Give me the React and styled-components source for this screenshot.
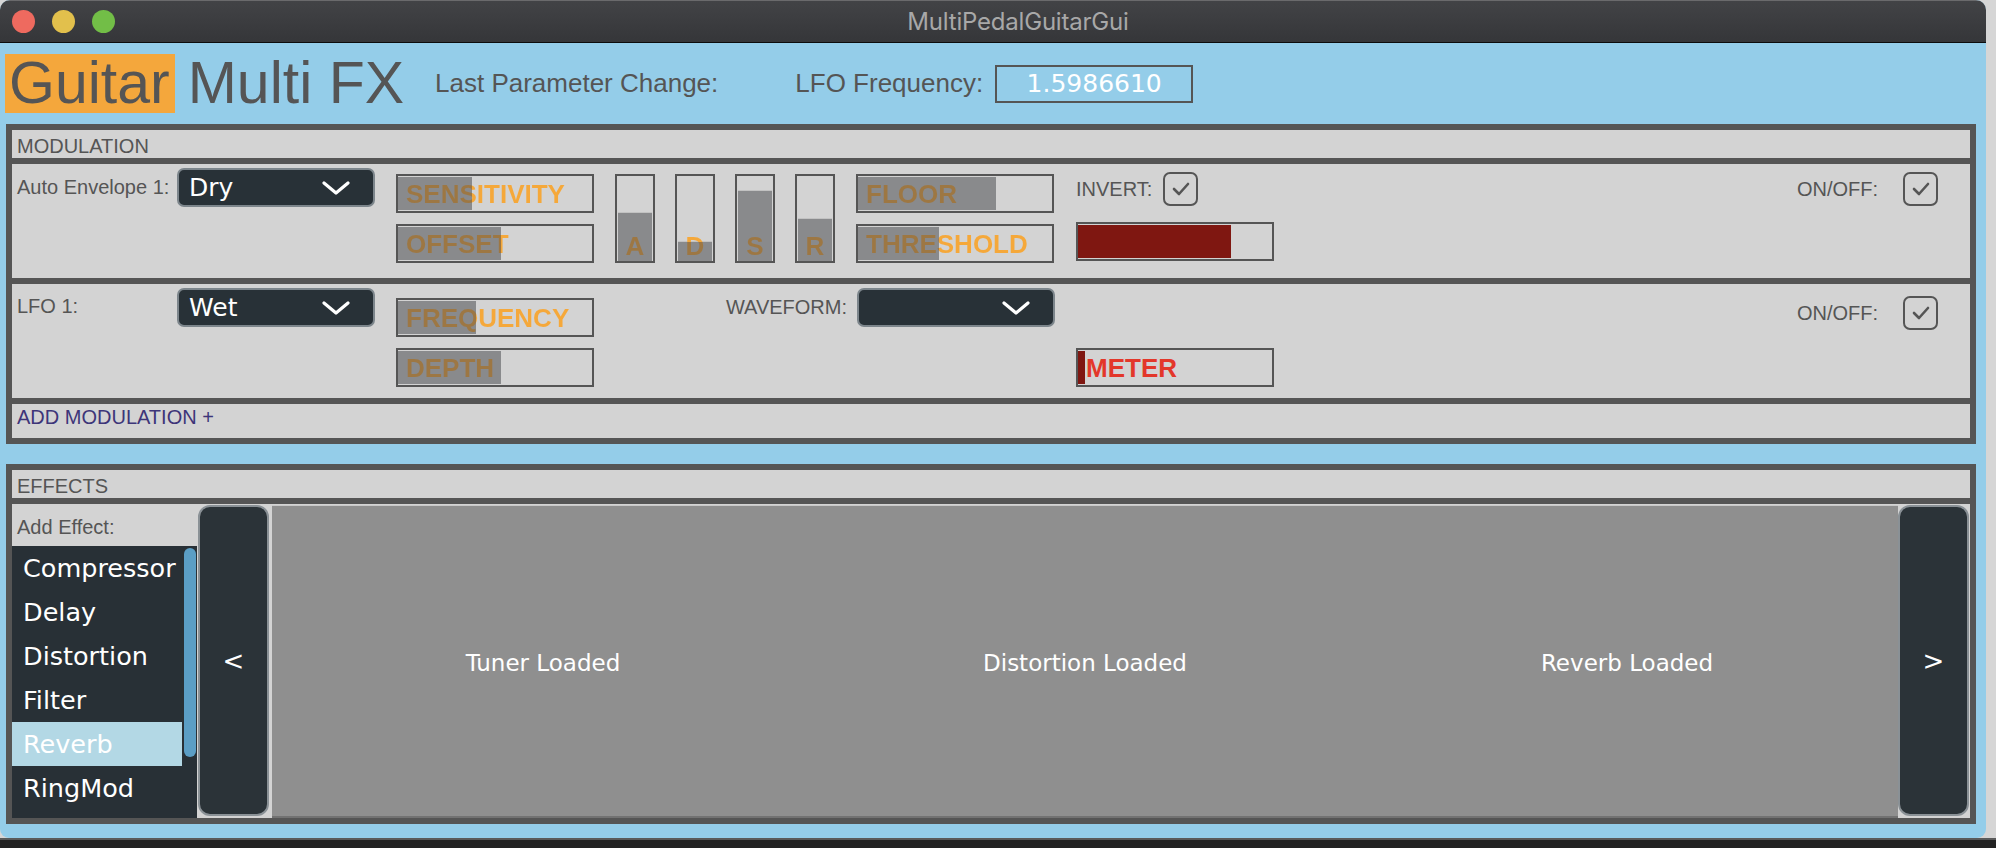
import React from "react";
import styled, { createGlobalStyle } from "styled-components";

const GlobalStyle = createGlobalStyle`
  html, body {
    margin: 0;
    padding: 0;
    background: #d6d6d6;
  }
  body {
    width: 1996px;
    height: 848px;
    overflow: hidden;
    font-family: "Liberation Sans", Arial, sans-serif;
  }
`;

const Screen = styled.div`
  width: 1996px;
  height: 848px;
  display: flex;
  flex-direction: column;
`;

const Window = styled.div`
  width: 1986px;
  height: 838px;
  flex: none;
  background: #94cde9;
  border-radius: 10px 10px 9px 9px;
  overflow: hidden;
  display: flex;
  flex-direction: column;
`;

const Desk = styled.div`
  flex: 1;
  background: #232323;
  border-top: 2px solid #5a5a5a;
`;

/* ---------- title bar ---------- */

const TitleBar = styled.div`
  height: 43px;
  flex: none;
  display: grid;
  grid-template-columns: 1fr auto 1fr;
  align-items: center;
  background: linear-gradient(#424346, #353639);
  border-top: 1px solid #6a6a6c;
  border-bottom: 1px solid #0c0c0c;
  box-sizing: border-box;
`;

const Lights = styled.div`
  display: flex;
  gap: 17px;
  padding-left: 12px;
`;

const Light = styled.span`
  width: 23px;
  height: 23px;
  border-radius: 50%;
  background: ${(p) => p.$color};
`;

const WindowTitle = styled.div`
  margin-left: 50px;
  font-family: Inter, "Open Sans", sans-serif;
  font-size: 24px;
  color: #a8a8a8;
  letter-spacing: -0.2px;
`;

/* ---------- header ---------- */

const Header = styled.header`
  height: 81px;
  flex: none;
  display: flex;
  align-items: center;
  padding-left: 5px;
  color: #555555;
`;

const Brand = styled.h1`
  margin: 0;
  display: flex;
  gap: 13px;
  font-size: 59px;
  font-weight: 400;
  line-height: 59px;
`;

const BrandMark = styled.span`
  background: #f4a73c;
  padding: 0 5px 0 4px;
`;

const HeaderLabel = styled.span`
  font-size: 26px;
  margin-left: ${(p) => p.$gap}px;
`;

const ValueBox = styled.div`
  margin-left: 12px;
  width: 198px;
  height: 38px;
  box-sizing: border-box;
  border: 2px solid #555555;
  display: flex;
  align-items: center;
  justify-content: center;
  color: #ffffff;
  font-family: "DejaVu Sans", sans-serif;
  font-size: 25px;
`;

/* ---------- panels ---------- */

const Panel = styled.section`
  margin: ${(p) => p.$top}px 10px 0 6px;
  padding: 6px;
  background: #555555;
  display: flex;
  flex-direction: column;
  gap: 6px;
`;

const PanelHeading = styled.div`
  height: 28px;
  background: #d3d3d3;
  color: #555555;
  font-size: 20px;
  line-height: 28px;
  padding: 2px 0 0 5px;
  box-sizing: border-box;
`;

const ControlRow = styled.div`
  height: 114px;
  background: #d3d3d3;
  display: grid;
  grid-template-columns: 144px 198px 198px 220px 199px 198px 1fr;
  column-gap: 21px;
  align-items: start;
  padding-right: 32px;
`;

const Cell = styled.div`
  margin-top: ${(p) => p.$top || 0}px;
  grid-column: ${(p) => p.$col || "auto"};
  display: flex;
  flex-direction: ${(p) => (p.$stack ? "column" : "row")};
  gap: ${(p) => p.$gap || 0}px;
  align-items: ${(p) => p.$align || "stretch"};
  justify-content: ${(p) => p.$justify || "flex-start"};
`;

const RowLabel = styled.span`
  margin-top: ${(p) => p.$top}px;
  padding-left: 5px;
  font-size: 20px;
  color: #555555;
  white-space: nowrap;
`;

const SmallLabel = styled.span`
  font-size: 20px;
  color: #555555;
  white-space: nowrap;
`;

const AddRow = styled.div`
  height: 34px;
  box-sizing: border-box;
  background: #d3d3d3;
  color: #3d3579;
  font-size: 20px;
  line-height: 26px;
  padding: 0 0 0 5px;
`;

/* ---------- controls ---------- */

const Select = styled.div`
  width: 198px;
  height: 39px;
  box-sizing: border-box;
  border: 2px solid #7c858b;
  border-radius: 7px;
  background: #283137;
  display: flex;
  align-items: center;
  justify-content: space-between;
  padding: 0 22px 0 10px;
  color: #ffffff;
  font-family: "DejaVu Sans", sans-serif;
  font-size: 25px;
`;

const Chevron = () => (
  <svg width="30" height="14" viewBox="0 0 30 14">
    <polyline
      points="3,2 15,12 27,2"
      fill="none"
      stroke="#ffffff"
      strokeWidth="3.2"
      strokeLinecap="round"
      strokeLinejoin="round"
    />
  </svg>
);

const SliderBox = styled.div`
  position: relative;
  width: 198px;
  height: 39px;
  box-sizing: border-box;
  border: 2px solid #555555;
  overflow: hidden;
`;

const SliderFill = styled.div`
  position: absolute;
  left: 0;
  top: 1px;
  bottom: 1px;
  background: ${(p) => p.$bg};
`;

/* label is tinted darker where the fill lies behind it */
const SliderText = styled.div`
  position: absolute;
  inset: 0;
  display: flex;
  align-items: center;
  padding: 2px 0 0 8px;
  font-size: 26px;
  font-weight: 700;
  white-space: nowrap;
  color: transparent;
  -webkit-background-clip: text;
  background-clip: text;
`;

const Slider = ({ label, value }) => (
  <SliderBox>
    <SliderFill $bg="#898a8c" style={{ width: `${value}%` }} />
    <SliderText
      style={{
        backgroundImage: `linear-gradient(to right, #9d7743 ${value}%, #f5a83a ${value}%)`,
      }}
    >
      {label}
    </SliderText>
  </SliderBox>
);

const MeterText = styled.span`
  position: relative;
  padding-left: 8px;
  font-size: 26px;
  font-weight: 700;
  color: #e3372a;
  line-height: 37px;
`;

const Meter = ({ value, label }) => (
  <SliderBox>
    <SliderFill $bg="#7f1711" style={{ width: `${value}%` }} />
    {label && <MeterText>{label}</MeterText>}
  </SliderBox>
);

const FaderBox = styled.div`
  position: relative;
  width: 40px;
  height: 89px;
  box-sizing: border-box;
  border: 2px solid #555555;
  overflow: hidden;
`;

const FaderFill = styled.div`
  position: absolute;
  left: 1px;
  right: 1px;
  bottom: 0;
  background: #898a8c;
  border-top: 1px solid #c2c2c2;
`;

const FaderText = styled.div`
  position: absolute;
  inset: 0;
  display: flex;
  align-items: flex-end;
  justify-content: center;
  padding-bottom: 1px;
  font-size: 26px;
  font-weight: 700;
  line-height: 28px;
  color: transparent;
  -webkit-background-clip: text;
  background-clip: text;
`;

const Fader = ({ label, value }) => (
  <FaderBox>
    <FaderFill style={{ height: `${value}%` }} />
    <FaderText
      style={{
        backgroundImage: `linear-gradient(to top, #9d7743 ${value}%, #f5a83a ${value}%)`,
      }}
    >
      {label}
    </FaderText>
  </FaderBox>
);

const CheckBox = styled.div`
  width: 35px;
  height: 34px;
  box-sizing: border-box;
  border: 2px solid #555555;
  border-radius: 7px;
  display: flex;
  align-items: center;
  justify-content: center;
`;

const Check = () => (
  <CheckBox>
    <svg width="18" height="14" viewBox="0 0 18 14">
      <polyline
        points="2,7 7,12 16,2"
        fill="none"
        stroke="#555555"
        strokeWidth="2.6"
        strokeLinecap="round"
        strokeLinejoin="round"
      />
    </svg>
  </CheckBox>
);

/* ---------- effects ---------- */

const EffectsBody = styled.div`
  height: 314px;
  background: #d3d3d3;
  display: flex;
`;

const EffectColumn = styled.div`
  width: 185px;
  flex: none;
  display: flex;
  flex-direction: column;
`;

const AddEffect = styled.div`
  height: 42px;
  flex: none;
  padding: 4px 0 0 5px;
  box-sizing: border-box;
  font-size: 20px;
  line-height: 38px;
  color: #555555;
`;

const EffectList = styled.ul`
  position: relative;
  flex: 1;
  margin: 0;
  padding: 0;
  list-style: none;
  background: #283036;
`;

const EffectItem = styled.li`
  width: 170px;
  height: 44px;
  padding-left: 11px;
  box-sizing: border-box;
  font-family: "DejaVu Sans", sans-serif;
  font-size: 25.5px;
  line-height: 44px;
  color: #ffffff;
  background: ${(p) => (p.$selected ? "#b3d8e5" : "transparent")};
`;

const ScrollThumb = styled.div`
  position: absolute;
  right: 1px;
  top: 2px;
  width: 12px;
  height: 209px;
  border-radius: 6px;
  background: #5b9ec5;
`;

const NavButton = styled.div`
  width: 71px;
  flex: none;
  margin: 1px ${(p) => p.$mr}px 2px ${(p) => p.$ml}px;
  box-sizing: border-box;
  border: 2px solid #8a9196;
  border-radius: 12px;
  background: #2b3338;
  display: flex;
  align-items: center;
  justify-content: center;
  color: #ffffff;
  font-family: "DejaVu Sans", sans-serif;
  font-size: 26px;
`;

const Stage = styled.div`
  flex: 1;
  margin: 1px 0 0;
  background: #8f8f8f;
  border-top: 1px solid #c9c9c9;
  border-bottom: 2px solid #727272;
  display: grid;
  grid-template-columns: repeat(3, 1fr);
  align-items: center;
`;

const Slot = styled.div`
  text-align: center;
  color: #ffffff;
  font-family: "DejaVu Sans", sans-serif;
  font-size: 23px;
  padding-top: 3px;
`;

const effects = ["Compressor", "Delay", "Distortion", "Filter", "Reverb", "RingMod"];

export default function App() {
  return (
    <Screen>
      <GlobalStyle />
      <Window>
        <TitleBar>
          <Lights>
            <Light $color="#ee6a5f" />
            <Light $color="#e2c04c" />
            <Light $color="#72be47" />
          </Lights>
          <WindowTitle>MultiPedalGuitarGui</WindowTitle>
          <div />
        </TitleBar>

        <Header>
          <Brand>
            <BrandMark>Guitar</BrandMark>
            <span>Multi FX</span>
          </Brand>
          <HeaderLabel $gap={31}>Last Parameter Change:</HeaderLabel>
          <HeaderLabel $gap={77}>LFO Frequency:</HeaderLabel>
          <ValueBox>1.5986610</ValueBox>
        </Header>

        <Panel $top={0}>
          <PanelHeading>MODULATION</PanelHeading>

          <ControlRow>
            <RowLabel $top={12}>Auto Envelope 1:</RowLabel>
            <Cell $top={4}>
              <Select>
                <span>Dry</span>
                <Chevron />
              </Select>
            </Cell>
            <Cell $top={10} $stack $gap={11}>
              <Slider label="SENSITIVITY" value={38} />
              <Slider label="OFFSET" value={53} />
            </Cell>
            <Cell $top={10} $gap={20}>
              <Fader label="A" value={56} />
              <Fader label="D" value={22} />
              <Fader label="S" value={82} />
              <Fader label="R" value={49} />
            </Cell>
            <Cell $top={10} $stack $gap={11}>
              <Slider label="FLOOR" value={71} />
              <Slider label="THRESHOLD" value={42} />
            </Cell>
            <Cell $top={8} $stack $gap={16}>
              <Cell $align="center" $gap={11}>
                <SmallLabel>INVERT:</SmallLabel>
                <Check />
              </Cell>
              <Meter value={79} />
            </Cell>
            <Cell $top={8} $align="center" $justify="flex-end" $gap={25}>
              <SmallLabel>ON/OFF:</SmallLabel>
              <Check />
            </Cell>
          </ControlRow>

          <ControlRow>
            <RowLabel $top={11}>LFO 1:</RowLabel>
            <Cell $top={4}>
              <Select>
                <span>Wet</span>
                <Chevron />
              </Select>
            </Cell>
            <Cell $top={14} $stack $gap={11}>
              <Slider label="FREQUENCY" value={40} />
              <Slider label="DEPTH" value={53} />
            </Cell>
            <Cell $top={4} $col="4 / span 2" $align="center" $justify="flex-end" $gap={10}>
              <SmallLabel>WAVEFORM:</SmallLabel>
              <Select>
                <span />
                <Chevron />
              </Select>
            </Cell>
            <Cell $top={64}>
              <Meter value={3.5} label="METER" />
            </Cell>
            <Cell $top={12} $align="center" $justify="flex-end" $gap={25}>
              <SmallLabel>ON/OFF:</SmallLabel>
              <Check />
            </Cell>
          </ControlRow>

          <AddRow>ADD MODULATION +</AddRow>
        </Panel>

        <Panel $top={20}>
          <PanelHeading>EFFECTS</PanelHeading>
          <EffectsBody>
            <EffectColumn>
              <AddEffect>Add Effect:</AddEffect>
              <EffectList>
                {effects.map((name) => (
                  <EffectItem key={name} $selected={name === "Reverb"}>
                    {name}
                  </EffectItem>
                ))}
                <ScrollThumb />
              </EffectList>
            </EffectColumn>
            <NavButton $ml={1} $mr={3}>&lt;</NavButton>
            <Stage>
              <Slot>Tuner Loaded</Slot>
              <Slot>Distortion Loaded</Slot>
              <Slot>Reverb Loaded</Slot>
            </Stage>
            <NavButton $ml={0} $mr={1}>&gt;</NavButton>
          </EffectsBody>
        </Panel>
      </Window>
      <Desk />
    </Screen>
  );
}
